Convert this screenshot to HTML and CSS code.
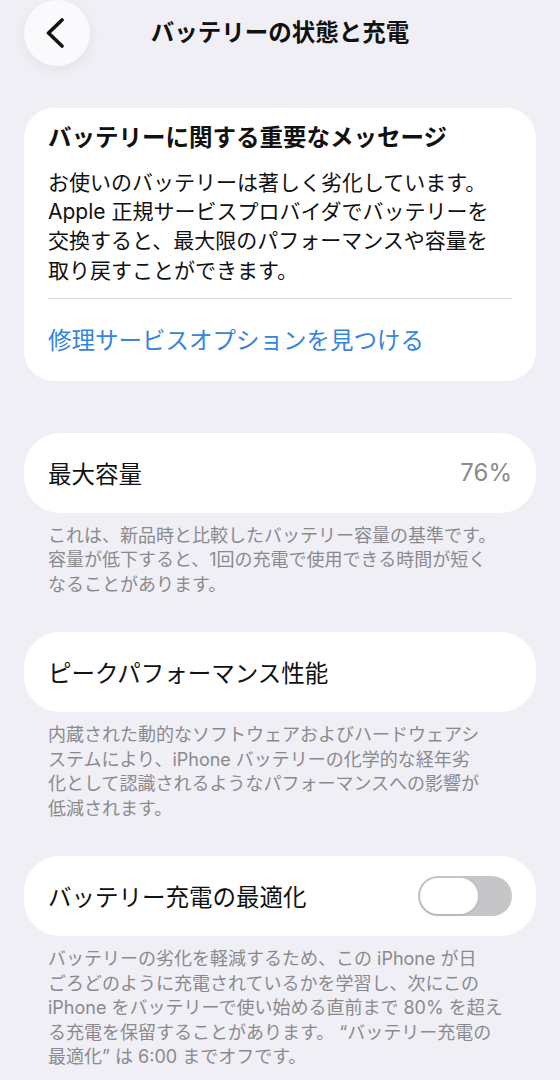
FILE: index.html
```html
<!DOCTYPE html>
<html lang="ja">
<head>
<meta charset="UTF-8">
<meta name="viewport" content="width=device-width, initial-scale=1.0">
<title>バッテリーの状態と充電</title>
<link rel="stylesheet" href="styles.css">
</head>
<body>

<header class="topbar">
  <button class="back" aria-label="戻る">
    <svg width="20" height="30" viewBox="0 0 20 30"><path d="M17 2 L3.5 15 L17 28" fill="none" stroke="#111" stroke-width="3.6" stroke-linecap="round" stroke-linejoin="round"/></svg>
  </button>
  <h1>バッテリーの状態と充電</h1>
  <span></span>
</header>

<main class="page">
  <!-- 重要なメッセージ -->
  <section class="card notice">
    <h2>バッテリーに関する重要なメッセージ</h2>
    <p>お使いのバッテリーは著しく劣化しています。<br>Apple 正規サービスプロバイダでバッテリーを<br>交換すると、最大限のパフォーマンスや容量を<br>取り戻すことができます。</p>
    <div class="divider"></div>
    <a class="link" href="#">修理サービスオプションを見つける</a>
  </section>

  <section class="card row">
    <span class="label">最大容量</span>
    <span class="value">76%</span>
  </section>
  <p class="note">これは、新品時と比較したバッテリー容量の基準です。<br>容量が低下すると、1回の充電で使用できる時間が短く<br>なることがあります。</p>

  <section class="card row">
    <span class="label">ピークパフォーマンス性能</span>
  </section>
  <p class="note">内蔵された動的なソフトウェアおよびハードウェアシ<br>ステムにより、iPhone バッテリーの化学的な経年劣<br>化として認識されるようなパフォーマンスへの影響が<br>低減されます。</p>

  <section class="card row">
    <span class="label">バッテリー充電の最適化</span>
    <span class="toggle"><span class="knob"></span></span>
  </section>
  <p class="note">バッテリーの劣化を軽減するため、この iPhone が日<br>ごろどのように充電されているかを学習し、次にこの<br>iPhone をバッテリーで使い始める直前まで 80% を超え<br>る充電を保留することがあります。 “バッテリー充電の<br>最適化” は 6:00 までオフです。</p>
</main>

</body>
</html>
```

FILE: styles.css
```css
body {
  margin: 0;
  background: #f0eff5;
  color: #111;
  font-family: Inter, "Noto Sans CJK JP", sans-serif;
}

/* ヘッダー */
.topbar {
  display: grid;
  grid-template-columns: 66px 1fr 66px;
  align-items: center;
  height: 66px;
  padding: 0 24px;
}
.back {
  width: 66px; height: 66px;
  border: none;
  border-radius: 50%;
  background: #fafafc;
  box-shadow: 0 4px 14px rgba(0,0,0,0.06);
  display: flex;
  justify-content: center;
  align-items: center;
  padding: 0 4px 0 0;
}
.topbar h1 {
  margin: 0;
  text-align: center;
  font-size: 23.5px;
  font-weight: 700;
  line-height: 30px;
}

.page { padding: 42px 24px 0; }

/* カード */
.card {
  background: #fff;
  border-radius: 36px;
}
.notice {
  border-radius: 30px;
  padding: 15px 24px 25px;
}
.notice h2 {
  margin: 0;
  font-size: 23.5px;
  line-height: 30px;
  font-weight: 700;
}
.notice p {
  margin: 15px 0 0;
  font-size: 21px;
  line-height: 29.2px;
}
.divider {
  height: 1px;
  background: #dedee2;
  margin-top: 13px;
}
.link {
  display: block;
  margin-top: 27px;
  color: #3585dc;
  text-decoration: none;
  font-size: 23.5px;
  line-height: 30px;
}

.row {
  height: 80px;
  padding: 0 24px;
  display: flex;
  align-items: center;
  justify-content: space-between;
  margin-top: 52px;
}
.label { font-size: 23.5px; }
.value { font-size: 24px; color: #8a8a8e; }

.note {
  margin: 11px 0 0;
  padding: 0 0 0 24px;
  font-size: 18px;
  line-height: 24.5px;
  color: #8a8a8e;
  white-space: nowrap;
}
.note + .row { margin-top: 35px; }

/* トグル */
.toggle {
  width: 94px; height: 40px;
  border-radius: 20px;
  background: #c6c6c9;
  display: flex;
  align-items: center;
  padding: 0 2px;
  box-sizing: border-box;
}
.knob {
  width: 58px; height: 36px;
  border-radius: 18px;
  background: #fff;
  box-shadow: 0 1px 3px rgba(0,0,0,0.12);
}
```
